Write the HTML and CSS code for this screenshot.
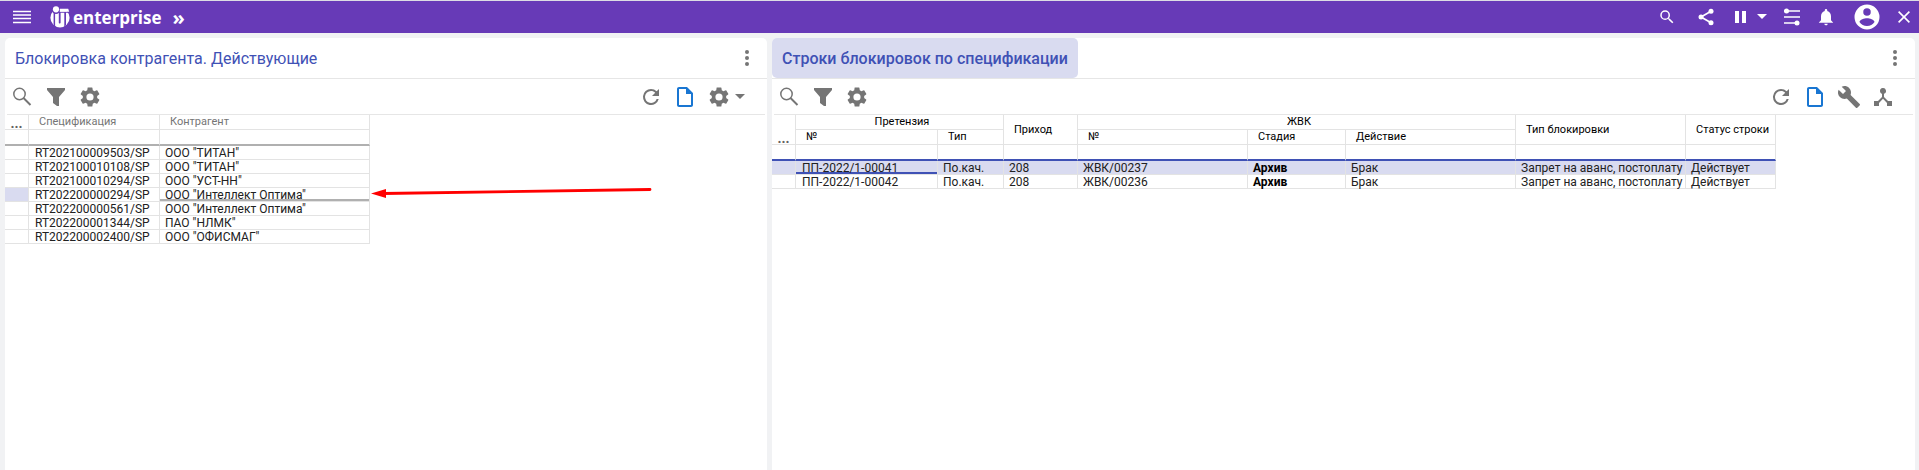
FILE: index.html
```html
<!DOCTYPE html>
<html lang="ru">
<head>
<meta charset="utf-8">
<title>IT enterprise</title>
<link rel="stylesheet" href="styles.css">
</head>
<body>
<svg class="defs" aria-hidden="true">
  <symbol id="search" viewBox="0 0 24 24"><path d="M15.5 14h-.79l-.28-.27A6.47 6.47 0 0 0 16 9.5 6.5 6.5 0 1 0 9.5 16c1.61 0 3.09-.59 4.23-1.57l.27.28v.79l5 4.99L20.49 19zm-6 0a4.5 4.5 0 1 1 0-9 4.5 4.5 0 0 1 0 9"/></symbol>
  <symbol id="search-thin" viewBox="0 0 24 24"><circle cx="9.5" cy="9" r="5.7" fill="none" stroke="currentColor" stroke-width="1.5"/><path d="M13.5 13l7 7" fill="none" stroke="currentColor" stroke-width="2"/></symbol>
  <symbol id="filter" viewBox="0 0 24 24"><path d="M3 3h18v2l-6 7v9h-2l-4-3v-6L3 5z"/></symbol>
  <symbol id="gear" viewBox="0 0 24 24"><path d="M19.14 12.94c.04-.3.06-.61.06-.94 0-.32-.02-.64-.07-.94l2.03-1.58a.49.49 0 0 0 .12-.61l-1.92-3.32a.49.49 0 0 0-.59-.22l-2.39.96c-.5-.38-1.03-.7-1.62-.94l-.36-2.54a.48.48 0 0 0-.48-.41h-3.84c-.24 0-.43.17-.47.41l-.36 2.54c-.59.24-1.13.57-1.62.94l-2.39-.96a.49.49 0 0 0-.59.22L2.74 8.87c-.12.21-.08.47.12.61l2.03 1.58c-.05.3-.09.63-.09.94s.02.64.07.94l-2.03 1.58a.49.49 0 0 0-.12.61l1.92 3.32c.12.22.37.29.59.22l2.39-.96c.5.38 1.03.7 1.62.94l.36 2.54c.05.24.24.41.48.41h3.84c.24 0 .44-.17.47-.41l.36-2.54c.59-.24 1.13-.56 1.62-.94l2.39.96c.22.08.47 0 .59-.22l1.92-3.32a.49.49 0 0 0-.12-.61zM12 15.6a3.6 3.6 0 1 1 0-7.2 3.6 3.6 0 0 1 0 7.2"/></symbol>
  <symbol id="refresh" viewBox="0 0 24 24"><path d="M17.65 6.35A7.96 7.96 0 0 0 12 4a8 8 0 1 0 7.73 10h-2.08A6 6 0 1 1 12 6c1.66 0 3.14.69 4.22 1.78L13 11h7V4z"/></symbol>
  <symbol id="file" viewBox="0 0 24 24"><path d="M14 2H6c-1.1 0-2 .9-2 2v16c0 1.100.9 2 2 2h12c1.100 0 2-.9 2-2V8zM6 20V4h7v5h5v11z"/></symbol>
  <symbol id="wrench" viewBox="0 0 24 24"><path d="M22.7 19l-9.100-9.100c.9-2.300.4-5-1.500-6.900-2-2-5-2.400-7.400-1.300L9 6 6 9 1.600 4.700C.4 7.100.9 10.100 2.900 12.100c1.900 1.900 4.600 2.400 6.900 1.500l9.100 9.100c.4.4 1 .4 1.400 0l2.300-2.300c.5-.4.5-1.100.1-1.400"/></symbol>
  <symbol id="hub" viewBox="0 0 24 24"><path d="M17 16l-4-4V8.820A3 3 0 1 0 9 6c0 1.300.84 2.400 2 2.820V12l-4 4H3v5h5v-3.050l4-4.200 4 4.200V21h5v-5z"/></symbol>
  <symbol id="dots" viewBox="0 0 24 24"><circle cx="12" cy="6" r="2"/><circle cx="12" cy="12" r="2"/><circle cx="12" cy="18" r="2"/></symbol>
  <symbol id="caret" viewBox="0 0 10 6"><path d="M0 0h10L5 5z"/></symbol>
</svg>

<header class="topbar">
  <button class="menu" aria-label="Меню"><svg viewBox="0 0 18 14"><path d="M0 1.500h18M0 5h18M0 8.500h18M0 12.500h18" fill="none" stroke="currentColor" stroke-width="1.500"/></svg></button>
  <a class="brand" href="#">
    <svg class="mark" viewBox="0 0 20 22"><circle cx="10" cy="11.800" r="9.600"/><g class="cut"><circle cx="6" cy="3.600" r="4.300"/><path d="M3.600 6h1.500v14.500l-1.500-1zM8.800 6h1.800v10.500c0 1.300-1.800 1.300-1.800 0zM14.300 6h1.700v13l-1.700 1.500zM8.800 5.500H20v1.300H8.800zM9 0h11v3H9z"/></g><circle cx="6" cy="3.300" r="3.100"/><path d="M9.800 2.800h8.400l1 2.900H9.800z"/></svg>
    <span>enterprise</span>
  </a>
  <button class="expand" aria-label="Развернуть">»</button>
  <nav class="actions">
    <button class="w24" aria-label="Поиск"><svg class="i18"><use href="#search"/></svg></button>
    <button class="w54" aria-label="Поделиться"><svg class="i20" viewBox="0 0 24 24"><path d="M6 12L18 5M6 12l12 7" fill="none" stroke="currentColor" stroke-width="2"/><circle cx="18" cy="5" r="3"/><circle cx="6" cy="12" r="3"/><circle cx="18" cy="19" r="3"/></svg></button>
    <button class="w16" aria-label="Пауза"><svg viewBox="0 0 12 12"><path d="M0 0h4v12H0zM7 0h4v12H7z"/></svg></button>
    <button class="w26" aria-label="Список"><svg class="caret"><use href="#caret"/></svg></button>
    <button class="w34" aria-label="Параметры"><svg class="i18" viewBox="0 0 18 18"><path d="M1 3h16M1 9h16M1 15h15" fill="none" stroke="currentColor" stroke-width="1.500"/><circle cx="3.500" cy="3" r="2.500"/><circle cx="14" cy="15" r="2.500"/></svg></button>
    <button class="w34" aria-label="Уведомления"><svg class="i20" viewBox="0 0 24 24"><path d="M12 22c1.100 0 2-.9 2-2h-4a2 2 0 0 0 2 2m6-6v-5c0-3.070-1.630-5.640-4.500-6.320V4a1.500 1.500 0 0 0-3 0v.68C7.640 5.360 6 7.920 6 11v5l-2.500 2.500V19h17v-.5z"/></svg></button>
    <button class="w48" aria-label="Профиль"><svg class="i30" viewBox="0 0 24 24"><path d="M12 2a10 10 0 1 0 0 20 10 10 0 0 0 0-20m0 3a3 3 0 1 1 0 6 3 3 0 0 1 0-6m0 14.200a7.200 7.200 0 0 1-6-3.220c.03-1.990 4-3.080 6-3.080s5.970 1.090 6 3.080a7.200 7.200 0 0 1-6 3.220"/></svg></button>
    <button class="w26" aria-label="Закрыть"><svg class="i12" viewBox="0 0 12 12"><path d="M.6.6l10.800 10.800M11.400.6L.6 11.400" fill="none" stroke="currentColor" stroke-width="1.600"/></svg></button>
  </nav>
</header>

<main class="panels">
  <section class="panel">
    <div class="titlebar">
      <h2 class="title">Блокировка контрагента. Действующие</h2>
      <button class="more" aria-label="Ещё"><svg><use href="#dots"/></svg></button>
    </div>
    <div class="toolbar toolbar-left">
      <button aria-label="Поиск"><svg><use href="#search-thin"/></svg></button>
      <button aria-label="Фильтр"><svg><use href="#filter"/></svg></button>
      <button aria-label="Настройки"><svg><use href="#gear"/></svg></button>
      <span class="spacer"></span>
      <button aria-label="Обновить"><svg><use href="#refresh"/></svg></button>
      <button class="blue" aria-label="Документ"><svg><use href="#file"/></svg></button>
      <button class="split" aria-label="Настройки вида"><svg><use href="#gear"/></svg><svg class="caret"><use href="#caret"/></svg></button>
    </div>
    <table class="grid contractors">
      <colgroup><col class="c24"><col class="c131"><col class="c210"></colgroup>
      <thead>
        <tr><th class="dots">...</th><th>Спецификация</th><th>Контрагент</th></tr>
        <tr class="filter"><td></td><td></td><td></td></tr>
      </thead>
      <tbody>
        <tr><td></td><td>RT202100009503/SP</td><td>ООО "ТИТАН"</td></tr>
        <tr><td></td><td>RT202100010108/SP</td><td>ООО "ТИТАН"</td></tr>
        <tr><td></td><td>RT202100010294/SP</td><td>ООО "УСТ-НН"</td></tr>
        <tr><td class="marked"></td><td>RT202200000294/SP</td><td class="current">ООО "Интеллект Оптима"</td></tr>
        <tr><td></td><td>RT202200000561/SP</td><td>ООО "Интеллект Оптима"</td></tr>
        <tr><td></td><td>RT202200001344/SP</td><td>ПАО "НЛМК"</td></tr>
        <tr><td></td><td>RT202200002400/SP</td><td>ООО "ОФИСМАГ"</td></tr>
      </tbody>
    </table>
    <svg class="arrow" viewBox="0 0 282 12" aria-hidden="true"><path d="M12 6.500L279 2.500" fill="none" stroke="#f00" stroke-width="2.800" stroke-linecap="round"/><path d="M0 6.500L15 2v9z" fill="#f00"/></svg>
  </section>

  <section class="panel">
    <div class="titlebar">
      <h2 class="title active">Строки блокировок по спецификации</h2>
      <button class="more" aria-label="Ещё"><svg><use href="#dots"/></svg></button>
    </div>
    <div class="toolbar">
      <button aria-label="Поиск"><svg><use href="#search-thin"/></svg></button>
      <button aria-label="Фильтр"><svg><use href="#filter"/></svg></button>
      <button aria-label="Настройки"><svg><use href="#gear"/></svg></button>
      <span class="spacer"></span>
      <button aria-label="Обновить"><svg><use href="#refresh"/></svg></button>
      <button class="blue" aria-label="Документ"><svg><use href="#file"/></svg></button>
      <button aria-label="Инструменты"><svg><use href="#wrench"/></svg></button>
      <button aria-label="Связи"><svg><use href="#hub"/></svg></button>
    </div>
    <table class="grid lines">
      <colgroup><col class="c24"><col class="c142"><col class="c66"><col class="c74"><col class="c170"><col class="c98"><col class="c170"><col class="c170"><col class="c90"></colgroup>
      <thead>
        <tr><th class="dots" rowspan="2">...</th><th class="group" colspan="2">Претензия</th><th rowspan="2">Приход</th><th class="group" colspan="3">ЖВК</th><th rowspan="2">Тип блокировки</th><th rowspan="2">Статус строки</th></tr>
        <tr><th>№</th><th>Тип</th><th>№</th><th>Стадия</th><th>Действие</th></tr>
        <tr class="filter"><td></td><td></td><td></td><td></td><td></td><td></td><td></td><td></td><td></td></tr>
      </thead>
      <tbody>
        <tr class="selected"><td></td><td class="current">ПП-2022/1-00041</td><td>По.кач.</td><td>208</td><td>ЖВК/00237</td><td class="stage">Архив</td><td>Брак</td><td>Запрет на аванс, постоплату</td><td>Действует</td></tr>
        <tr><td></td><td>ПП-2022/1-00042</td><td>По.кач.</td><td>208</td><td>ЖВК/00236</td><td class="stage">Архив</td><td>Брак</td><td>Запрет на аванс, постоплату</td><td>Действует</td></tr>
      </tbody>
    </table>
  </section>
</main>
</body>
</html>
```
FILE: styles.css
```css
* { box-sizing: border-box; }
body {
  margin: 0;
  min-height: 100vh;
  display: flex;
  flex-direction: column;
  background: #f1f2f4;
  color: #212121;
  font-family: Roboto, "Noto Sans", sans-serif;
}
.defs { position: absolute; width: 0; height: 0; }
svg { display: block; fill: currentColor; flex: none; }
button {
  display: flex;
  align-items: center;
  justify-content: center;
  border: 0;
  padding: 0;
  background: none;
  color: inherit;
  font: inherit;
}

.topbar {
  display: flex;
  align-items: center;
  height: 33px;
  padding: 0 2px 0 13px;
  border-top: 1px solid #dcdce4;
  background: #673ab7;
  color: #fff;
}
.menu svg { width: 18px; height: 14px; }
.brand {
  display: flex;
  gap: 3px;
  align-items: center;
  margin-left: 19px;
  color: #fff;
  text-decoration: none;
  font: 700 17px/22px "Open Sans", sans-serif;
}
.brand span { padding-top: 2px; }
.mark { width: 20px; height: 22px; }
.cut { fill: #673ab7; }
.expand { margin-left: 11px; padding-top: 2px; font: 700 20px/20px "Open Sans", sans-serif; }
.actions { display: flex; align-items: center; height: 32px; margin-left: auto; }
.i12 { width: 12px; height: 12px; }
.i18 { width: 18px; height: 18px; }
.i20 { width: 20px; height: 20px; }
.i30 { width: 30px; height: 30px; }
.w16 { width: 16px; }
.w16 svg { width: 12px; height: 12px; }
.w24 { width: 24px; }
.w26 { width: 26px; }
.w34 { width: 34px; }
.w48 { width: 48px; }
.w54 { width: 54px; }
.caret { width: 10px; height: 6px; }

.panels {
  flex: 1;
  display: grid;
  grid-template-columns: 2fr 3fr;
  gap: 5px;
  padding: 5px 4px 0 5px;
}
.panel {
  position: relative;
  min-width: 0;
  background: #fff;
  border-radius: 5px 5px 0 0;
}
.titlebar {
  display: flex;
  align-items: center;
  justify-content: space-between;
  height: 41px;
  padding-right: 8px;
  border-bottom: 1px solid #e6e6e6;
}
.title {
  margin: 0;
  padding: 2px 10px 0;
  color: #3f51b5;
  font-size: 16px;
  font-weight: 400;
  line-height: 38px;
}
.title.active { background: #d9dbf0; border-radius: 5px; font-weight: 500; }
.more { color: #757575; }
.more svg { width: 24px; height: 24px; }
.toolbar {
  display: flex;
  align-items: center;
  gap: 10px;
  height: 36px;
  margin: 0 2px;
  padding: 0 18px 0 3px;
  border-bottom: 1px solid #e6e6e6;
  color: #757575;
}
.toolbar svg { width: 24px; height: 24px; }
.toolbar .caret { width: 10px; height: 6px; }
.toolbar-left { padding-right: 20px; }
.split { gap: 4px; }
.spacer { flex: 1; }
.blue { color: #1976d2; }

.grid {
  table-layout: fixed;
  border-collapse: separate;
  border-spacing: 0;
  font-size: 12px;
  line-height: 12px;
}
.contractors { width: 365px; }
.lines { width: 1004px; }
.c24 { width: 24px; }
.c66 { width: 66px; }
.c74 { width: 74px; }
.c90 { width: 90px; }
.c98 { width: 98px; }
.c131 { width: 131px; }
.c142 { width: 142px; }
.c170 { width: 170px; }
.c210 { width: 210px; }
.grid th, .grid td {
  height: 14px;
  padding: 1px 0 0 5px;
  border: solid #e3e3e3;
  border-width: 0 1px 1px 0;
  text-align: left;
  white-space: nowrap;
}
.grid td:nth-child(2) { padding-left: 6px; }
.grid th {
  height: 15px;
  padding: 0 0 0 10px;
  font-size: 11px;
  font-weight: 400;
  color: #757575;
}
.lines th { color: #000; }
.grid .group { padding: 0 0 0 5px; text-align: center; }
.grid .dots {
  padding: 0;
  text-align: center;
  vertical-align: bottom;
  font-size: 14px;
  font-weight: 700;
  color: #616161;
}
.grid .filter td { height: 16px; border-bottom: 2px solid #b0b0b0; }
.lines .filter td { border-bottom-color: #3f51b5; }
.marked, .selected td { background: #d9dbf0; }
.current { box-shadow: inset 0 -2px #b0b0b0; }
.lines .current { box-shadow: inset 0 -2px #3f51b5; }
.stage { font-weight: 700; color: #000; }
.arrow {
  position: absolute;
  left: 366px;
  top: 149px;
  width: 282px;
  height: 12px;
}
```
